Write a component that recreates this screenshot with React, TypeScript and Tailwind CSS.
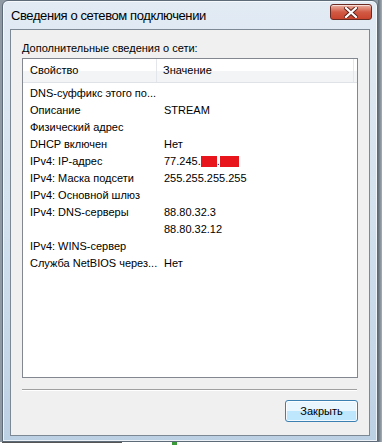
import React from "react";

type Row = { name: string; value: React.ReactNode };

const rows: Row[] = [
  { name: "DNS-суффикс этого по...", value: "" },
  { name: "Описание", value: "STREAM" },
  { name: "Физический адрес", value: "" },
  { name: "DHCP включен", value: "Нет" },
  {
    name: "IPv4: IP-адрес",
    value: (
      <span className="flex items-center">
        77.245.
        <span className="inline-block h-[11px] w-[16px] bg-[#e8161c]" />
        .
        <span className="inline-block h-[11px] w-[19px] bg-[#e8161c]" />
      </span>
    ),
  },
  { name: "IPv4: Маска подсети", value: "255.255.255.255" },
  { name: "IPv4: Основной шлюз", value: "" },
  { name: "IPv4: DNS-серверы", value: "88.80.32.3" },
  { name: "", value: "88.80.32.12" },
  { name: "IPv4: WINS-сервер", value: "" },
  { name: "Служба NetBIOS через...", value: "Нет" },
];

function CloseButton() {
  return (
    <div className="flex h-[16px] w-[42px] items-center justify-center rounded-[3px] border border-[#6b2a22] bg-gradient-to-b from-[#eab0a2] via-[#d25a45] to-[#c9442c] shadow-[inset_0_1px_0_rgba(255,255,255,0.6)]">
      <svg width="14" height="11" viewBox="0 0 14 11">
        <path
          d="M2 1 L12 10 M12 1 L2 10"
          stroke="#5a2018"
          strokeWidth="4"
          strokeLinecap="square"
        />
        <path
          d="M2 1 L12 10 M12 1 L2 10"
          stroke="#ffffff"
          strokeWidth="2.2"
          strokeLinecap="square"
        />
      </svg>
    </div>
  );
}

export default function App() {
  return (
    <div
      className="flex h-[446px] w-[382px] flex-col overflow-hidden bg-[#8e99a3]"
      style={{ fontFamily: '"Liberation Sans", Arial, sans-serif' }}
    >
      <div className="flex h-[442px]">
        {/* window frame */}
        <div className="ml-[2px] flex w-[376px] flex-col rounded-t-[6px] border border-[#5d6b78] bg-gradient-to-b from-[#e2ebf4] via-[#d3e1ee] to-[#bcd0e4] px-[7px] pb-[5px] shadow-[inset_0_0_0_1px_rgba(255,255,255,0.7)]">
          {/* title bar */}
          <div className="flex h-[28px] items-start justify-between">
            <span className="mt-[7px] pl-[1px] text-[13px] leading-[16px] tracking-[-0.4px] text-black">
              Сведения о сетевом подключении
            </span>
            <div className="mt-[3px] mr-[-2px]">
              <CloseButton />
            </div>
          </div>

          {/* client area */}
          <div className="flex flex-1 flex-col border border-[#7c8894] bg-[#f0f0f0] px-[11px] text-[11px] text-black">
            <div className="mt-[10px] h-[16px] leading-[16px]">
              Дополнительные сведения о сети:
            </div>

            {/* list view */}
            <div className="mt-[2px] flex h-[320px] flex-col border border-[#828790] bg-white">
              <div className="flex h-[24px] border-b border-[#dfe3e8] bg-gradient-to-b from-white from-50% to-[#f3f4f6] to-50%">
                <div className="flex w-[134px] items-center border-r border-[#e3e6ea] pl-[7px]">
                  Свойство
                </div>
                <div className="flex flex-1 items-center pl-[6px]">Значение</div>
                <div className="w-[4px] border-l border-[#e3e6ea]" />
              </div>
              <div className="flex flex-col pt-[2px]">
                {rows.map((r, i) => (
                  <div key={i} className="flex h-[17px] items-center">
                    <div className="w-[135px] truncate pl-[7px]">{r.name}</div>
                    <div className="pl-[6px]">{r.value}</div>
                  </div>
                ))}
              </div>
            </div>

            {/* separator */}
            <div className="mt-[11px] mr-[1px] h-[2px] border-t border-b border-t-[#a0a0a0] border-b-white" />

            <div className="mt-[9px] flex justify-end">
              <button className="h-[22px] w-[73px] rounded-[3px] border border-[#3c7fb1] bg-gradient-to-b from-[#eaf6fd] from-50% to-[#bee6fd] to-50% text-[11px] text-black shadow-[inset_0_0_0_1px_rgba(255,255,255,0.8)]">
                Закрыть
              </button>
            </div>
          </div>
        </div>
        <div className="flex-1 bg-gradient-to-r from-[#5f6b76] to-[#a7b0b8]" />
      </div>
      <div className="flex h-[4px] items-start gap-[2px] bg-white pl-[2px]">
        <div className="h-[2px] w-[120px] border-t border-[#555]" />
        <div className="ml-[48px] h-[3px] w-[5px] bg-[#3a9a3a]" />
      </div>
    </div>
  );
}
